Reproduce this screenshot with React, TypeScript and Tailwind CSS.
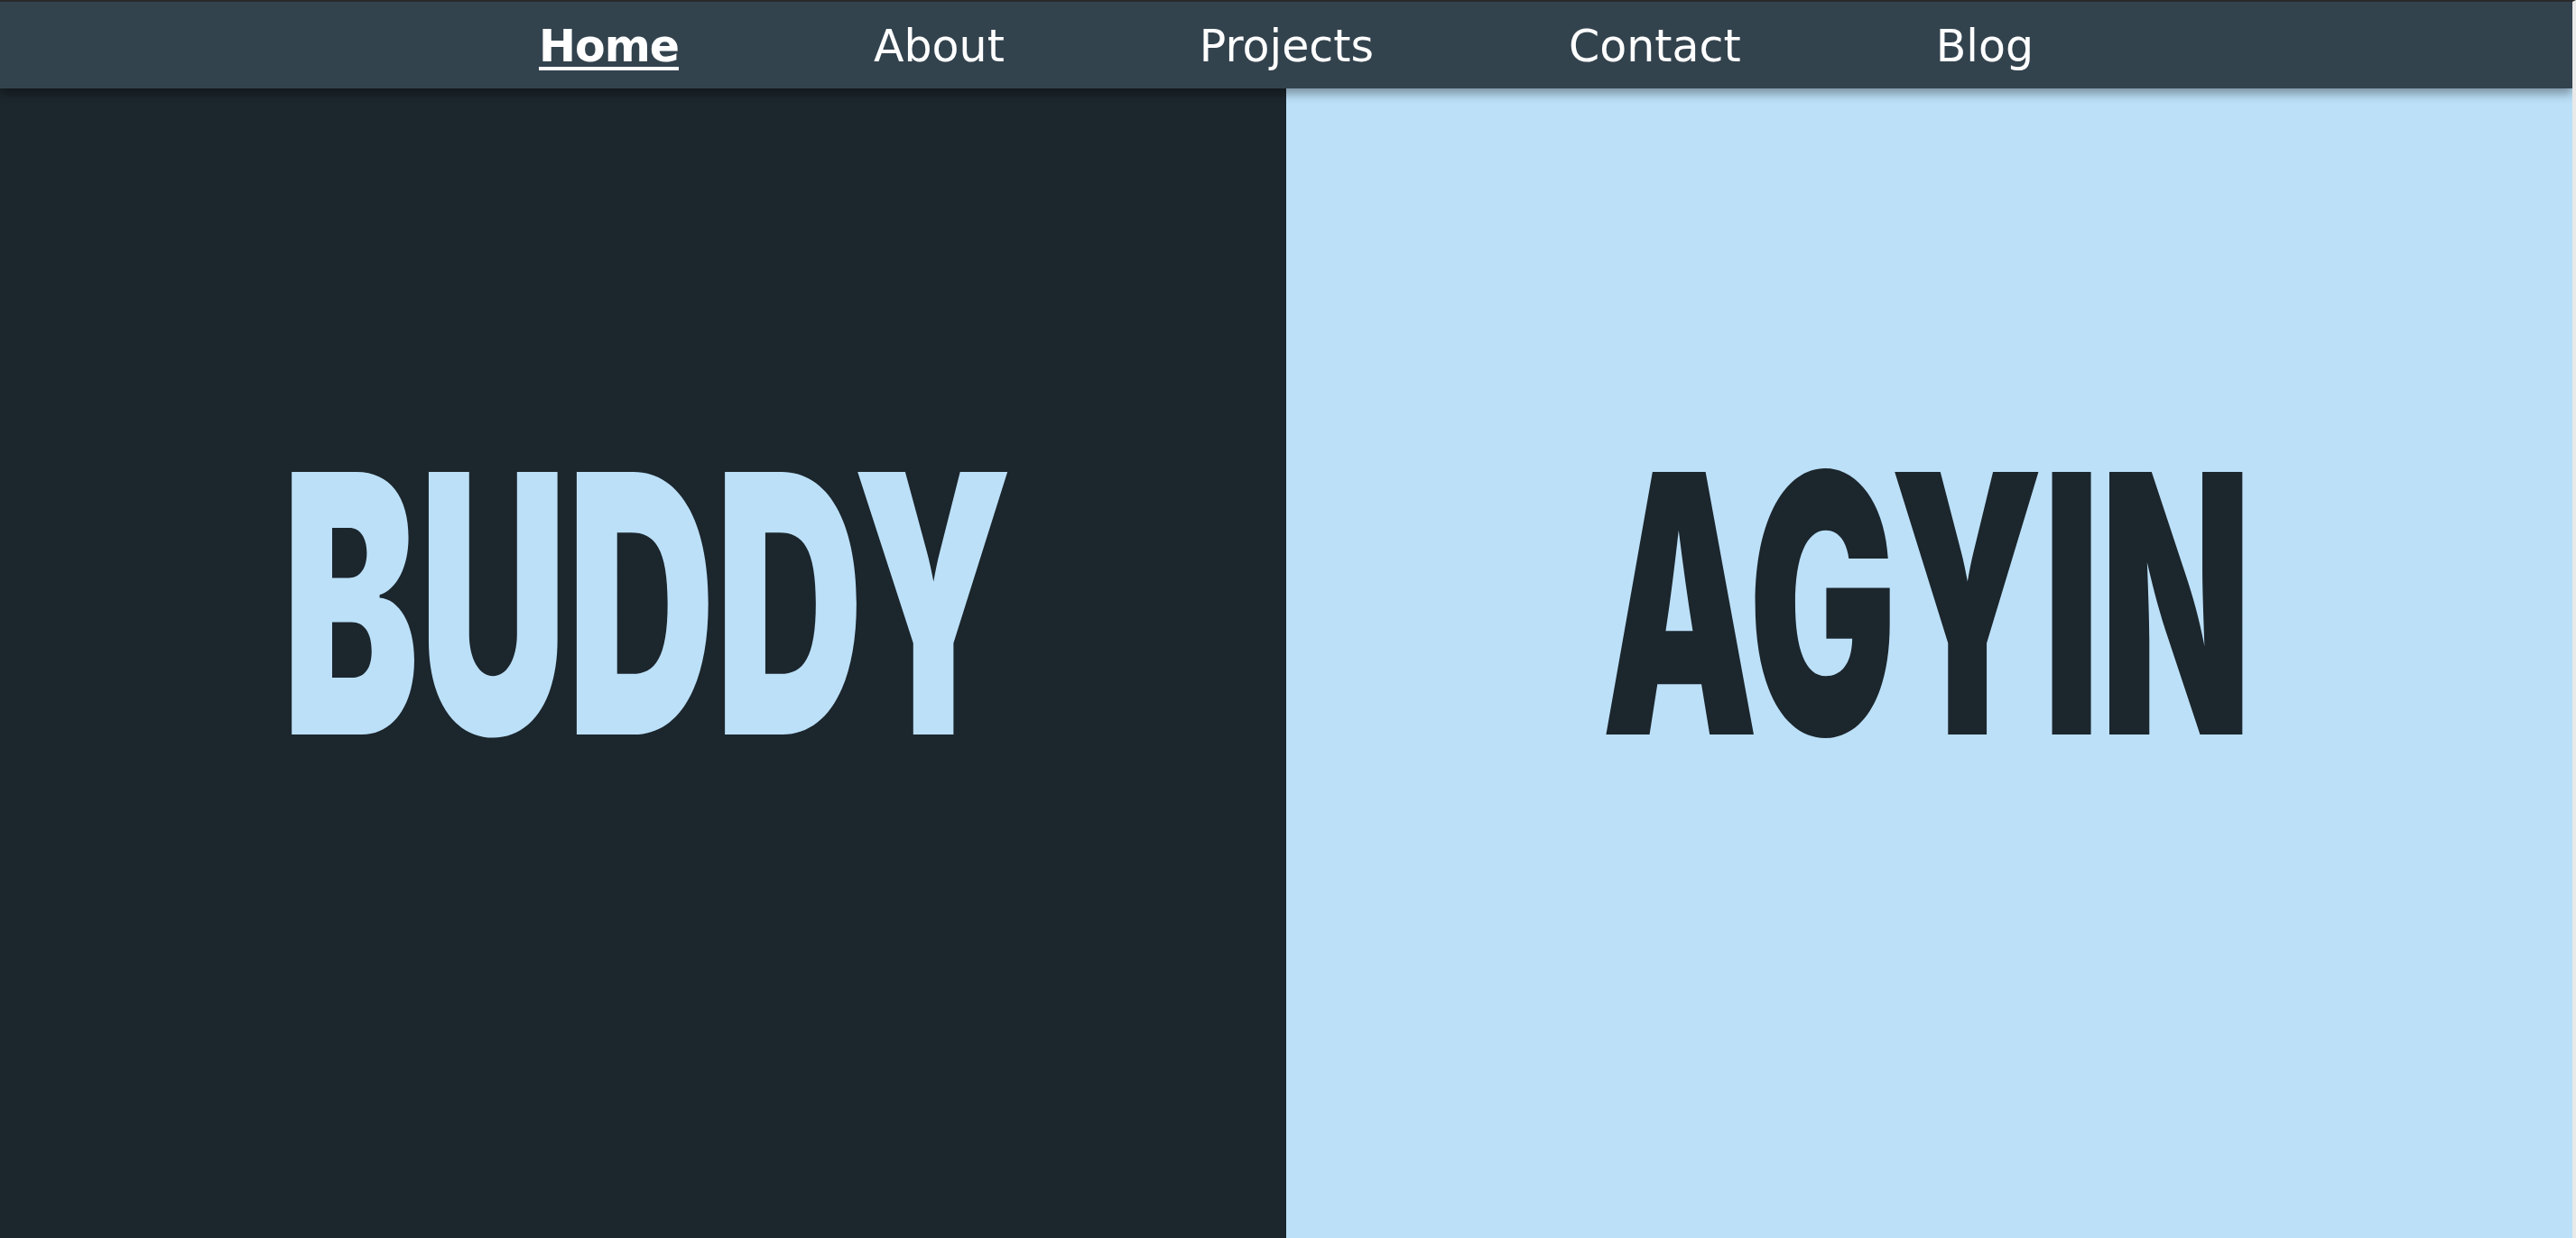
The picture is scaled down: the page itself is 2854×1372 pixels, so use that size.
const links = ["Home", "About", "Projects", "Contact", "Blog"];

function NavBar() {
  return (
    <nav className="relative z-10 h-[96px] pt-[4px] bg-[#33434e] shadow-[0_6px_10px_rgba(0,0,0,0.35)] flex items-center justify-center gap-[216px] font-['DejaVu_Sans',sans-serif] text-[49px] text-white">
      {links.map((l, i) =>
        i === 0 ? (
          <a
            key={l}
            className="font-bold tracking-[-1px] underline decoration-[4px] underline-offset-[6px]"
          >
            {l}
          </a>
        ) : (
          <a key={l} className="font-normal">
            {l}
          </a>
        )
      )}
    </nav>
  );
}

export default function App() {
  return (
    <div className="h-[1372px] w-full flex flex-col border-t-2 border-t-[#2a2a2a] border-r-4 border-r-[#e9e9e9] overflow-hidden">
      <NavBar />
      <div className="flex-1 grid grid-cols-2">
        <section className="bg-[#1c262d] flex justify-center items-start pt-[370px] overflow-hidden">
          <h1 className="font-['Inter',sans-serif] font-black text-[400px] leading-none text-[#bbe0f8] scale-x-[0.568] whitespace-nowrap translate-x-[4px]">
            BUDDY
          </h1>
        </section>
        <section className="bg-[#bbe0f8] flex justify-center items-start pt-[370px] overflow-hidden">
          <h1 className="font-['Inter',sans-serif] font-black text-[400px] leading-none text-[#1c262d] scale-x-[0.545] whitespace-nowrap -translate-x-[3px]">
            AGYIN
          </h1>
        </section>
      </div>
    </div>
  );
}
